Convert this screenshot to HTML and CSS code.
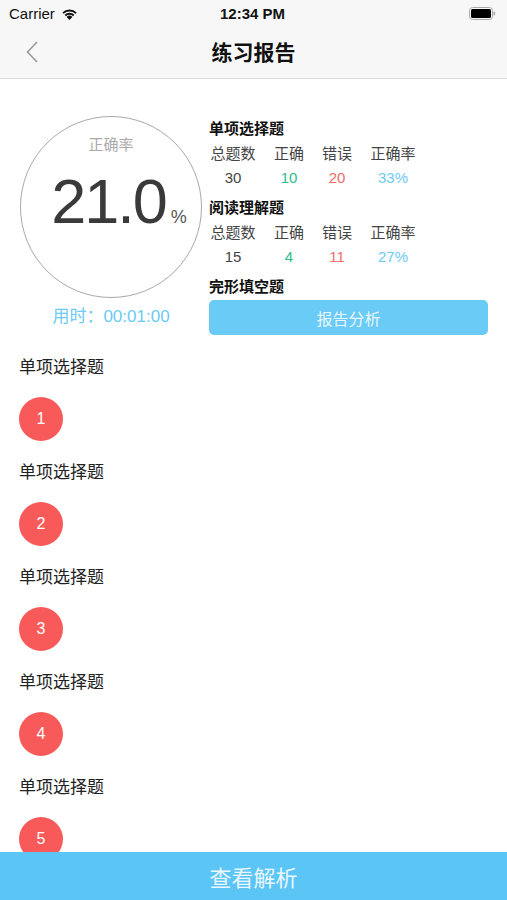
FILE: index.html
```html
<!DOCTYPE html>
<html lang="zh">
<head>
    <meta charset="UTF-8">
    <title>练习报告</title>
    <link rel="stylesheet" href="styles.css">
</head>
<body>
    <!-- Status bar + navigation -->
    <header class="topbar">
        <div class="status">
            <div class="status-left">
                <span>Carrier</span>
                <svg class="wifi" width="17" height="12" viewBox="0 0 17 12">
                    <path d="M8.5 12 L5.6 8.9 A4.2 4.2 0 0 1 11.4 8.9 Z" fill="#111"/>
                    <path d="M3.6 6.8 A7 7 0 0 1 13.4 6.8 L12.1 8.2 A5.1 5.1 0 0 0 4.9 8.2 Z" fill="#111"/>
                    <path d="M1.3 4.4 A10.3 10.3 0 0 1 15.7 4.4 L14.4 5.8 A8.4 8.4 0 0 0 2.6 5.8 Z" fill="#111"/>
                </svg>
            </div>
            <div class="status-time">12:34 PM</div>
            <div class="status-right">
                <svg width="27" height="13" viewBox="0 0 27 13">
                    <rect x="0.5" y="0.5" width="23" height="12" rx="3" fill="none" stroke="#aaa"/>
                    <rect x="2" y="2" width="20" height="9" rx="1.5" fill="#000"/>
                    <rect x="24.5" y="4.5" width="1.6" height="4" rx="0.8" fill="#aaa"/>
                </svg>
            </div>
        </div>
        <nav class="navbar">
            <svg class="back" width="12" height="22" viewBox="0 0 12 22">
                <path d="M11 1 L1.5 11 L11 21" fill="none" stroke="#9a9a9a" stroke-width="1.6"/>
            </svg>
            <h1>练习报告</h1>
        </nav>
    </header>

    <main class="content">
        <!-- Ringkasan skor -->
        <section class="summary">
            <div class="score-col">
                <div class="ring">
                    <div class="ring-label">正确率</div>
                    <div class="ring-value">21.0<span class="pct">%</span></div>
                </div>
                <div class="time">用时：00:01:00</div>
            </div>

            <div class="stats-col">
                <div class="stat-block">
                    <div class="stat-title">单项选择题</div>
                    <div class="stat-grid">
                        <span>总题数</span><span>正确</span><span>错误</span><span>正确率</span>
                        <span>30</span><span class="ok">10</span><span class="bad">20</span><span class="rate">33%</span>
                    </div>
                </div>
                <div class="stat-block">
                    <div class="stat-title">阅读理解题</div>
                    <div class="stat-grid">
                        <span>总题数</span><span>正确</span><span>错误</span><span>正确率</span>
                        <span>15</span><span class="ok">4</span><span class="bad">11</span><span class="rate">27%</span>
                    </div>
                </div>
                <div class="stat-block last">
                    <div class="stat-title">完形填空题</div>
                </div>
                <button class="report-btn">报告分析</button>
            </div>
        </section>

        <!-- Daftar soal -->
        <section class="questions">
            <div class="q-item"><div class="q-title">单项选择题</div><div class="q-num">1</div></div>
            <div class="q-item"><div class="q-title">单项选择题</div><div class="q-num">2</div></div>
            <div class="q-item"><div class="q-title">单项选择题</div><div class="q-num">3</div></div>
            <div class="q-item"><div class="q-title">单项选择题</div><div class="q-num">4</div></div>
            <div class="q-item"><div class="q-title">单项选择题</div><div class="q-num">5</div></div>
        </section>
    </main>

    <footer class="bottom-bar">查看解析</footer>
</body>
</html>
```

FILE: styles.css
```css
/* Dasar halaman */
body {
    margin: 0;
    font-family: "Liberation Sans", "Noto Sans CJK SC", sans-serif;
    color: #333;
    background: #fff;
}

/* Status bar dan navigasi */
.topbar {
    background: #f7f7f7;
    border-bottom: 1px solid #dcdcdc;
}

.status {
    height: 27px;
    display: flex;
    align-items: center;
    justify-content: space-between;
    padding: 0 9px;
    font-size: 15px;
    color: #111;
}

.status-left {
    flex: 1;
    display: flex;
    align-items: center;
    gap: 6px;
}

.status-time {
    font-weight: bold;
}

.status-right {
    flex: 1;
    display: flex;
    justify-content: flex-end;
    padding-right: 2px;
}

.navbar {
    height: 51px;
    padding-bottom: 3px;
    box-sizing: border-box;
    display: flex;
    align-items: center;
    justify-content: center;
    position: relative;
}

.navbar .back {
    position: absolute;
    left: 26px;
    top: 14px;
}

.navbar h1 {
    margin: 0;
    font-size: 21px;
    font-weight: bold;
    color: #111;
}

/* Konten */
.content {
    padding: 37px 0 60px;
}

.summary {
    display: flex;
    gap: 7px;
    padding: 0 19px 0 20px;
}

.score-col {
    width: 182px;
    display: flex;
    flex-direction: column;
    align-items: center;
}

.ring {
    width: 180px;
    height: 180px;
    border: 1px solid #a8a8a8;
    border-radius: 50%;
    display: flex;
    flex-direction: column;
    align-items: center;
}

.ring-label {
    margin-top: 16px;
    font-size: 15px;
    color: #aaa;
}

.ring-value {
    margin-top: 16px;
    margin-left: 16px;
    font-size: 63px;
    letter-spacing: -2px;
    line-height: 1;
    color: #3a3a3a;
}

.pct {
    font-size: 18px;
    letter-spacing: 0;
    color: #555;
    margin-left: 5px;
}

.time {
    margin-top: 4px;
    font-size: 17px;
    color: #6ccaf5;
}

.stats-col {
    flex: 1;
    display: flex;
    flex-direction: column;
}

.stat-block {
    margin-bottom: 5px;
}

.stat-block.last {
    margin-bottom: 0;
}

.stat-title {
    font-size: 15px;
    font-weight: bold;
    line-height: 26px;
    color: #111;
}

.stat-grid {
    display: grid;
    grid-template-columns: 48px 32px 32px 48px;
    column-gap: 16px;
    font-size: 15px;
    line-height: 24px;
    text-align: center;
    color: #444;
}

.ok { color: #2cbd8b; }
.bad { color: #f26b6b; }
.rate { color: #6ccaf5; }

.report-btn {
    height: 35px;
    border: none;
    border-radius: 5px;
    background: #6acbf6;
    color: #e8f6fd;
    font-family: inherit;
    font-size: 16px;
}

/* Daftar soal */
.questions {
    margin-top: 19px;
    padding-left: 19px;
}

.q-item {
    height: 105px;
}

.q-title {
    padding-top: 2px;
    font-size: 17px;
    line-height: 24px;
    color: #222;
}

.q-num {
    margin-top: 17px;
    width: 44px;
    height: 44px;
    border-radius: 50%;
    background: #f85a5a;
    color: #fff;
    font-size: 16px;
    display: flex;
    align-items: center;
    justify-content: center;
}

/* Tombol bawah */
.bottom-bar {
    position: fixed;
    left: 0;
    right: 0;
    bottom: 0;
    height: 48px;
    background: #5bc5f6;
    color: #eaf7fe;
    font-size: 22px;
    display: flex;
    align-items: center;
    justify-content: center;
}
```
